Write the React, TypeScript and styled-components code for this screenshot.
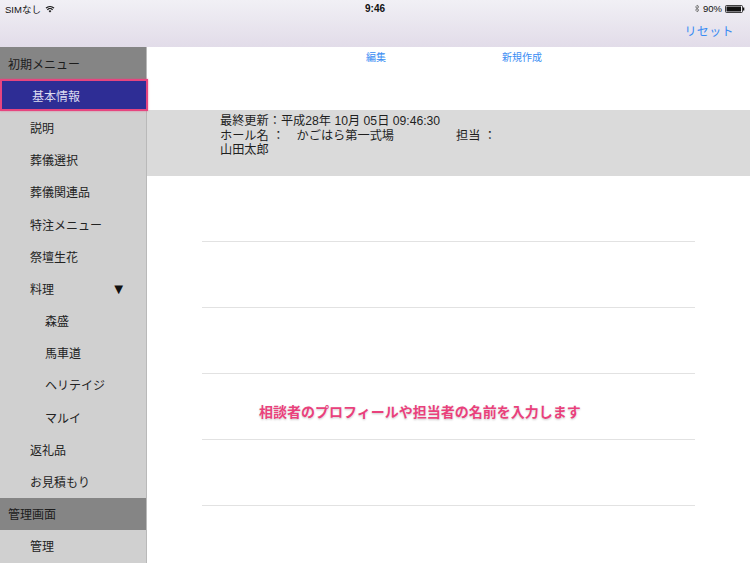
import React from "react";
import styled, { createGlobalStyle } from "styled-components";

const Global = createGlobalStyle`
  html, body { margin: 0; padding: 0; background: #fff; }
  body { font-family: "Liberation Sans", "Noto Sans CJK JP", sans-serif; }
  * { box-sizing: border-box; }
`;

const Page = styled.div`
  width: 750px;
  height: 563px;
  overflow: hidden;
  display: flex;
  flex-direction: column;
  background: #fff;
`;

const TopBar = styled.div`
  height: 47px;
  flex: none;
  background: linear-gradient(#f1f0f5, #e2dce9);
  display: flex;
  flex-direction: column;
`;

const StatusBar = styled.div`
  height: 17px;
  display: grid;
  grid-template-columns: 1fr auto 1fr;
  align-items: center;
  padding: 0 5px;
  font-size: 9.5px;
  color: #111;
`;

const StatusLeft = styled.div`
  display: flex;
  align-items: center;
  gap: 4px;
`;

const StatusTime = styled.div`
  font-weight: bold;
  font-size: 10px;
`;

const StatusRight = styled.div`
  display: flex;
  align-items: center;
  justify-content: flex-end;
  gap: 3px;
`;

const NavBar = styled.div`
  flex: 1;
  display: flex;
  justify-content: flex-end;
  align-items: center;
  padding: 0 16px 4px 0;
`;

const NavButton = styled.span`
  color: #3a8cf3;
  font-size: 12px;
  letter-spacing: 0.4px;
`;

const Body = styled.div`
  flex: 1;
  display: flex;
  min-height: 0;
`;

const Sidebar = styled.div`
  width: 147px;
  flex: none;
  background: #d0d0d0;
  border-right: 1px solid #b9b9b9;
  display: flex;
  flex-direction: column;
`;

const SideHeader = styled.div`
  height: 32.2px;
  flex: none;
  background: #858585;
  display: flex;
  align-items: center;
  padding-left: 8px;
  font-size: 12px;
  color: #1c1c1c;
`;

const SideItem = styled.div<{ $level: number; $selected?: boolean }>`
  height: 32.2px;
  flex: none;
  display: flex;
  align-items: center;
  justify-content: space-between;
  padding-left: ${(p) => (p.$level === 2 ? 45 : 30)}px;
  padding-right: 20px;
  font-size: 12px;
  color: ${(p) => (p.$selected ? "#dcdcf0" : "#222")};
  background: ${(p) => (p.$selected ? "#2e2d95" : "transparent")};
  border: ${(p) => (p.$selected ? "2px solid #e6457f" : "none")};
  margin-right: ${(p) => (p.$selected ? "-2px" : "0")};
  box-shadow: ${(p) => (p.$selected ? "0 0 2px rgba(230,69,127,0.6)" : "none")};
  position: relative;
  z-index: ${(p) => (p.$selected ? 1 : 0)};
`;

const Caret = styled.span`
  font-size: 15px;
  color: #111;
`;

const Main = styled.div`
  flex: 1;
  display: flex;
  flex-direction: column;
`;

const Toolbar = styled.div`
  height: 63px;
  flex: none;
  display: flex;
  align-items: flex-start;
  padding: 2px 0 0 219px;
  gap: 116px;
`;

const ToolButton = styled.span`
  color: #3a8cf3;
  font-size: 10px;
`;

const InfoBand = styled.div`
  height: 66px;
  flex: none;
  background: #dadada;
  padding: 4px 0 0 73px;
  font-size: 12.2px;
  line-height: 14.5px;
  color: #1f1f1f;
`;

const InfoLine = styled.div`
  display: flex;
  white-space: pre;
`;

const InfoCell = styled.span<{ $w?: number }>`
  width: ${(p) => (p.$w ? `${p.$w}px` : "auto")};
  flex: none;
`;

const FormList = styled.div`
  padding: 0 55px;
  display: flex;
  flex-direction: column;
`;

const FormRow = styled.div`
  height: 66px;
  border-bottom: 1px solid #e2e2e2;
  display: flex;
  align-items: center;
  padding: 8px 0 0 57px;
`;

const Hint = styled.span`
  color: #e9417c;
  font-size: 14px;
  font-weight: bold;
  text-shadow: 0 0 2px #fff, 0 1px 2px rgba(0, 0, 0, 0.25);
`;

const Wifi = () => (
  <svg width="10" height="8" viewBox="0 0 10 8">
    <path d="M5 7.5 L3.6 5.9 A2 2 0 0 1 6.4 5.9 Z" fill="#111" />
    <path d="M2.4 4.7 A3.7 3.7 0 0 1 7.6 4.7" stroke="#111" strokeWidth="1.2" fill="none" />
    <path d="M1 3.2 A5.6 5.6 0 0 1 9 3.2" stroke="#111" strokeWidth="1.2" fill="none" />
  </svg>
);

const Bluetooth = () => (
  <svg width="6" height="9" viewBox="0 0 6 9">
    <path d="M1 2.5 L5 6.2 L3 8 L3 1 L5 2.8 L1 6.5" stroke="#777" strokeWidth="0.9" fill="none" />
  </svg>
);

const Battery = () => (
  <svg width="20" height="8" viewBox="0 0 20 8">
    <rect x="0.5" y="0.5" width="17" height="7" rx="1" fill="none" stroke="#111" strokeWidth="0.8" />
    <rect x="1.5" y="1.5" width="14.5" height="5" fill="#111" />
    <rect x="18" y="2.5" width="1.3" height="3" fill="#111" />
  </svg>
);

type Item = { label: string; level: 0 | 1 | 2; selected?: boolean; caret?: boolean };

const items: Item[] = [
  { label: "初期メニュー", level: 0 },
  { label: "基本情報", level: 1, selected: true },
  { label: "説明", level: 1 },
  { label: "葬儀選択", level: 1 },
  { label: "葬儀関連品", level: 1 },
  { label: "特注メニュー", level: 1 },
  { label: "祭壇生花", level: 1 },
  { label: "料理", level: 1, caret: true },
  { label: "森盛", level: 2 },
  { label: "馬車道", level: 2 },
  { label: "ヘリテイジ", level: 2 },
  { label: "マルイ", level: 2 },
  { label: "返礼品", level: 1 },
  { label: "お見積もり", level: 1 },
  { label: "管理画面", level: 0 },
  { label: "管理", level: 1 },
];

export default function App() {
  return (
    <Page>
      <Global />
      <TopBar>
        <StatusBar>
          <StatusLeft>
            <span>SIMなし</span>
            <Wifi />
          </StatusLeft>
          <StatusTime>9:46</StatusTime>
          <StatusRight>
            <Bluetooth />
            <span>90%</span>
            <Battery />
          </StatusRight>
        </StatusBar>
        <NavBar>
          <NavButton>リセット</NavButton>
        </NavBar>
      </TopBar>
      <Body>
        <Sidebar>
          {items.map((it) =>
            it.level === 0 ? (
              <SideHeader key={it.label}>{it.label}</SideHeader>
            ) : (
              <SideItem key={it.label} $level={it.level} $selected={it.selected}>
                <span>{it.label}</span>
                {it.caret && <Caret>▼</Caret>}
              </SideItem>
            )
          )}
        </Sidebar>
        <Main>
          <Toolbar>
            <ToolButton>編集</ToolButton>
            <ToolButton>新規作成</ToolButton>
          </Toolbar>
          <InfoBand>
            <InfoLine>最終更新：平成28年 10月 05日 09:46:30</InfoLine>
            <InfoLine>
              <InfoCell $w={236}>ホール名 ：　かごはら第一式場</InfoCell>
              <InfoCell>担当 ：</InfoCell>
            </InfoLine>
            <InfoLine>山田太郎</InfoLine>
          </InfoBand>
          <FormList>
            <FormRow />
            <FormRow />
            <FormRow />
            <FormRow>
              <Hint>相談者のプロフィールや担当者の名前を入力します</Hint>
            </FormRow>
            <FormRow />
          </FormList>
        </Main>
      </Body>
    </Page>
  );
}
